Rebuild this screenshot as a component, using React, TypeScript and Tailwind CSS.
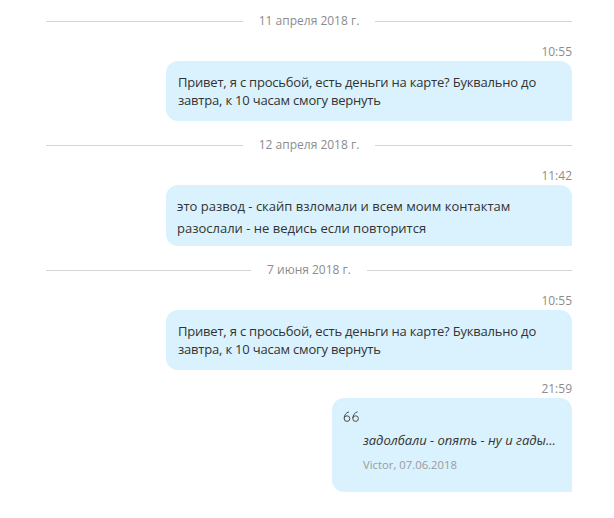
import type { ReactNode } from "react"

function DateDivider({ label }: { label: string }) {
    return (
        <div className="flex h-4 items-center gap-4">
            <div className="h-px flex-1 bg-[#d4d4d4]" />
            <span className="text-[12px] leading-4 text-[#8c8c8c]">{label}</span>
            <div className="h-px flex-1 bg-[#d4d4d4]" />
        </div>
    )
}

function Time({ value }: { value: string }) {
    return (
        <div className="text-right text-[12px] leading-4 text-[#8c8c8c]">{value}</div>
    )
}

function Bubble({ children, className = "" }: { children: ReactNode; className?: string }) {
    return (
        <div
            className={`ml-auto mt-px rounded-tl-[12px] rounded-tr-[12px] rounded-bl-[12px] bg-[#daf2fd] text-[#333333] ${className}`}
        >
            {children}
        </div>
    )
}

function QuoteMark() {
    return (
        <svg width="17" height="11" viewBox="0 0 17 11" fill="none" stroke="#4a4a4a" strokeWidth="1">
            <circle cx="4" cy="7.6" r="2.8" />
            <path d="M1.2 7.4C1.2 4.2 3 1.6 6 0.8" />
            <circle cx="12.6" cy="7.6" r="2.8" />
            <path d="M9.8 7.4C9.8 4.2 11.6 1.6 14.6 0.8" />
        </svg>
    )
}

export default function App() {
    return (
        <div
            className="min-h-[518px] w-[614px] bg-white pb-6 pl-[46px] pr-[42px] pt-[13px]"
            style={{ fontFamily: '"Open Sans", "Noto Sans", sans-serif' }}
        >
            <DateDivider label="11 апреля 2018 г." />

            <div className="mt-[15px]">
                <Time value="10:55" />
                <Bubble className="w-[406px] px-3 py-3 text-[13px] leading-[18px] tracking-[-0.2px]">
                    Привет, я с просьбой, есть деньги на карте? Буквально до
                    <br />
                    завтра, к 10 часам смогу вернуть
                </Bubble>
            </div>

            <div className="mt-4">
                <DateDivider label="12 апреля 2018 г." />
            </div>

            <div className="mt-[15px]">
                <Time value="11:42" />
                <Bubble className="w-[406px] px-[11px] pb-[7px] pt-[10px] text-[13px] leading-[22px]">
                    это развод - скайп взломали и всем моим контактам
                    <br />
                    разослали - не ведись если повторится
                </Bubble>
            </div>

            <div className="mt-4">
                <DateDivider label="7 июня 2018 г." />
            </div>

            <div className="mt-[15px]">
                <Time value="10:55" />
                <Bubble className="w-[406px] px-3 py-3 text-[13px] leading-[18px] tracking-[-0.2px]">
                    Привет, я с просьбой, есть деньги на карте? Буквально до
                    <br />
                    завтра, к 10 часам смогу вернуть
                </Bubble>
            </div>

            <div className="mt-[11px]">
                <Time value="21:59" />
                <Bubble className="w-[240px] pb-[19px] pl-[11px] pr-3 pt-[13px]">
                    <QuoteMark />
                    <div className="pl-5">
                        <div className="mt-2 text-[13px] italic leading-5 text-[#333333]">
                            задолбали - опять - ну и гады...
                        </div>
                        <div className="mt-[7px] text-[11.3px] leading-4 text-[#9a9a9a]">
                            Victor, 07.06.2018
                        </div>
                    </div>
                </Bubble>
            </div>
        </div>
    )
}
